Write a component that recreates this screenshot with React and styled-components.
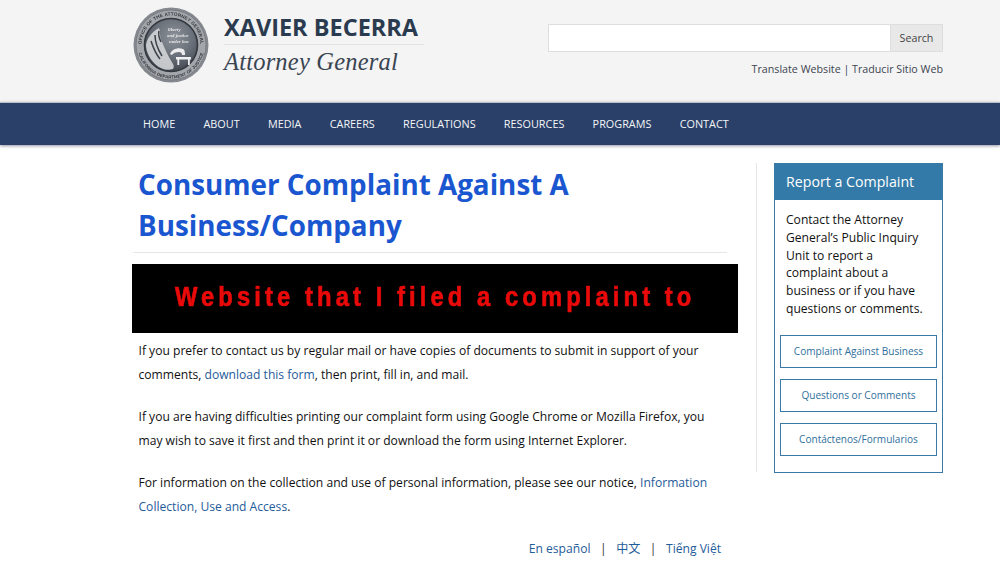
import React from 'react';
import styled, { createGlobalStyle } from 'styled-components';

const GlobalStyle = createGlobalStyle`
  html, body {
    margin: 0;
    padding: 0;
    background: #fff;
    font-family: 'Open Sans', 'Noto Sans CJK SC', sans-serif;
    color: #111;
  }
  * { box-sizing: border-box; }
`;

const Page = styled.div`
  width: 1000px;
  height: 582px;
  overflow: hidden;
`;

const Header = styled.header`
  height: 102px;
  background: #f4f4f4;
  display: flex;
  justify-content: space-between;
  padding: 7px 57px 0 133px;
`;

const Brand = styled.div`
  display: flex;
  gap: 15px;
`;

const SealWrap = styled.div`
  width: 76px;
  height: 76px;
  filter: blur(0.3px);
`;

const BrandText = styled.div`
  display: flex;
  flex-direction: column;
  width: 200px;
  padding-top: 5px;
`;

const Name = styled.div`
  font-size: 23.5px;
  line-height: 30px;
  font-weight: 700;
  color: #2b3b4f;
  white-space: nowrap;
  height: 33px;
  border-bottom: 1px solid #e3e3e3;
  width: 200px;
`;

const Title = styled.div`
  font-family: 'Liberation Serif', serif;
  font-style: italic;
  font-size: 24.5px;
  line-height: 30px;
  letter-spacing: 0.2px;
  color: #3a4452;
  white-space: nowrap;
  margin-top: 2px;
`;

const Tools = styled.div`
  width: 395px;
  padding-top: 17px;
  display: flex;
  flex-direction: column;
  align-items: flex-end;
`;

const SearchForm = styled.form`
  display: flex;
  width: 100%;
  height: 28px;
`;

const SearchInput = styled.input`
  flex: 1;
  min-width: 0;
  background: #fff;
  border: 1px solid #dedede;
  border-right: 0;
  outline: none;
`;

const SearchButton = styled.button`
  width: 53px;
  background: #e8e8e8;
  border: 1px solid #dedede;
  font: 400 10.7px 'Open Sans', sans-serif;
  color: #444;
  padding: 0;
`;

const TranslateLine = styled.div`
  margin-top: 9px;
  font-size: 10.7px;
  line-height: 16px;
  color: #3c4450;
  white-space: nowrap;
`;

const NavBar = styled.nav`
  height: 43px;
  background: #2a4069;
  border-top: 1px solid #b9c3cc;
  box-shadow: 0 1px 3px rgba(60, 60, 90, 0.55);
  display: flex;
  align-items: center;
  gap: 28.25px;
  padding: 0 0 1px 143px;
  position: relative;
`;

const NavLink = styled.a`
  font-size: 10.85px;
  line-height: 16px;
  color: #f4f6f8;
  white-space: nowrap;
`;

const Content = styled.div`
  display: grid;
  grid-template-columns: 641px 169px;
  padding: 18px 0 0 133px;
`;

const Main = styled.main`
  display: flex;
  flex-direction: column;
`;

const Heading = styled.h1`
  margin: 0;
  padding: 1px 0 6px 5px;
  font-size: 27.8px;
  line-height: 41px;
  font-weight: 700;
  color: #1a56cf;
  border-bottom: 1px solid #e6e6e6;
  width: 594px;
`;

const Banner = styled.div`
  width: 606px;
  height: 69px;
  margin: 11px 0 6px -1px;
  background: #000;
  display: flex;
  align-items: center;
  justify-content: center;
  overflow: hidden;
  padding-bottom: 3px;
`;

const BannerText = styled.span`
  flex-shrink: 0;
  font-family: 'Liberation Sans', sans-serif;
  font-weight: 700;
  font-size: 28px;
  letter-spacing: 4.8px;
  color: #ea0a0a;
  white-space: nowrap;
  transform: scaleX(0.85);
  -webkit-text-stroke: 0.7px #ea0a0a;
`;

const Para = styled.p`
  margin: 0 0 18px 0;
  padding-left: 5.5px;
  width: 594px;
  font-size: 12.1px;
  line-height: 24px;
  color: #111;
`;

const TextLink = styled.a`
  color: #1f5c9a;
`;

const LangLine = styled.div`
  width: 588px;
  display: flex;
  justify-content: flex-end;
  gap: 9.5px;
  font-size: 12.1px;
  line-height: 24px;
`;

const Divider = styled.span`
  color: #333;
`;

const Aside = styled.aside`
  width: 169px;
  height: 310px;
  border: 1px solid #397aa6;
  display: flex;
  flex-direction: column;
  position: relative;
  &::before {
    content: '';
    position: absolute;
    left: -19px;
    top: -1px;
    bottom: 0;
    width: 1px;
    background: #e6e6e6;
  }
`;

const AsideTitle = styled.div`
  height: 36px;
  background: #347aa8;
  color: #fff;
  font-size: 14.2px;
  line-height: 35px;
  padding-left: 11px;
  white-space: nowrap;
`;

const AsideBody = styled.div`
  padding: 11px 5px 0;
  display: flex;
  flex-direction: column;
  gap: 11px;
`;

const AsideText = styled.p`
  margin: 0 0 6px;
  padding: 0 6px;
  font-size: 12.1px;
  line-height: 17.8px;
  color: #111;
`;

const AsideButton = styled.a`
  height: 33px;
  border: 1px solid #397aa6;
  color: #2f6f9c;
  font-size: 10.05px;
  display: flex;
  align-items: center;
  justify-content: center;
  white-space: nowrap;
`;

const Seal = () => (
  <svg width="76" height="76" viewBox="0 0 76 76">
    <defs>
      <path id="sealTop" d="M9.6 46A29.5 29.5 0 1 1 66.4 46" fill="none" />
      <path id="sealBottom" d="M4.5 38a33.5 33.5 0 0 0 67 0" fill="none" />
      <radialGradient id="sealFace" cx="55%" cy="35%" r="70%">
        <stop offset="0" stopColor="#8d9299" />
        <stop offset="0.55" stopColor="#686e77" />
        <stop offset="1" stopColor="#3a3f48" />
      </radialGradient>
    </defs>
    <circle cx="38" cy="38" r="37.5" fill="#85898f" />
    <circle cx="38" cy="38" r="35" fill="#a3a6ab" stroke="#74787e" strokeWidth="0.8" />
    <circle cx="38" cy="38" r="26.5" fill="url(#sealFace)" stroke="#33383f" strokeWidth="1.6" />
    <text fontFamily="'Liberation Sans', sans-serif" fontSize="4.6" fontWeight="700" fill="#33373d" letterSpacing="0.2">
      <textPath href="#sealTop" startOffset="50%" textAnchor="middle">OFFICE OF THE ATTORNEY GENERAL</textPath>
    </text>
    <text fontFamily="'Liberation Sans', sans-serif" fontSize="4.4" fontWeight="700" fill="#33373d" letterSpacing="0.1">
      <textPath href="#sealBottom" startOffset="50%" textAnchor="middle">CALIFORNIA DEPARTMENT OF JUSTICE</textPath>
    </text>
    <path d="M13 38c1-7 6-13 13-17 2 5 0 9 3 14 3 7 6 14 11 22 1 2 1 3 0 5-6 2-13 0-18-5-5-5-9-12-9-19z" fill="#d2d4d7" opacity="0.9" />
    <path d="M18 34c2 6 4 12 9 18M22 28c0 7 2 13 7 21M26 24c-1 4 0 7 2 11" stroke="#3c4149" strokeWidth="1.5" fill="none" />
    <path d="M37 47c2-5 8-7 13-5 2 1 2 4 2 6h-3c0-2-1-3-3-3-3 0-6 1-7 3z" fill="#ececee" />
    <path d="M43 50h15v2.4h-1.2v5.6h-1.8v-5.6h-8.8v5.6h-1.8v-5.6H43z" fill="#f0f0f2" />
    <g fontFamily="'Liberation Serif', serif" fontStyle="italic" fontWeight="700" fontSize="4.8" fill="#e6e7ea">
      <text x="35" y="24">liberty</text>
      <text x="34" y="30">and justice</text>
      <text x="36" y="36">under law</text>
    </g>
  </svg>
);

const navItems = ['HOME', 'ABOUT', 'MEDIA', 'CAREERS', 'REGULATIONS', 'RESOURCES', 'PROGRAMS', 'CONTACT'];
const asideLinks = ['Complaint Against Business', 'Questions or Comments', 'Contáctenos/Formularios'];

const App = () => {
  return (
    <Page>
      <GlobalStyle />
      <Header>
        <Brand>
          <SealWrap>
            <Seal />
          </SealWrap>
          <BrandText>
            <Name>XAVIER BECERRA</Name>
            <Title>Attorney General</Title>
          </BrandText>
        </Brand>
        <Tools>
          <SearchForm>
            <SearchInput />
            <SearchButton type="button">Search</SearchButton>
          </SearchForm>
          <TranslateLine>Translate Website | Traducir Sitio Web</TranslateLine>
        </Tools>
      </Header>
      <NavBar>
        {navItems.map((item) => (
          <NavLink key={item}>{item}</NavLink>
        ))}
      </NavBar>
      <Content>
        <Main>
          <Heading>Consumer Complaint Against A Business/Company</Heading>
          <Banner>
            <BannerText>Website that I filed a complaint to</BannerText>
          </Banner>
          <Para>
            If you prefer to contact us by regular mail or have copies of documents to submit in support of your
            comments, <TextLink>download this form</TextLink>, then print, fill in, and mail.
          </Para>
          <Para>
            If you are having difficulties printing our complaint form using Google Chrome or Mozilla Firefox, you
            may wish to save it first and then print it or download the form using Internet Explorer.
          </Para>
          <Para>
            For information on the collection and use of personal information, please see our notice,{' '}
            <TextLink>Information Collection, Use and Access</TextLink>.
          </Para>
          <LangLine>
            <TextLink>En español</TextLink>
            <Divider>|</Divider>
            <TextLink>中文</TextLink>
            <Divider>|</Divider>
            <TextLink>Tiếng Việt</TextLink>
          </LangLine>
        </Main>
        <Aside>
          <AsideTitle>Report a Complaint</AsideTitle>
          <AsideBody>
            <AsideText>
              Contact the Attorney General’s Public Inquiry Unit to report a complaint about a business or if you
              have questions or comments.
            </AsideText>
            {asideLinks.map((label) => (
              <AsideButton key={label}>{label}</AsideButton>
            ))}
          </AsideBody>
        </Aside>
      </Content>
    </Page>
  );
};

export default App;
